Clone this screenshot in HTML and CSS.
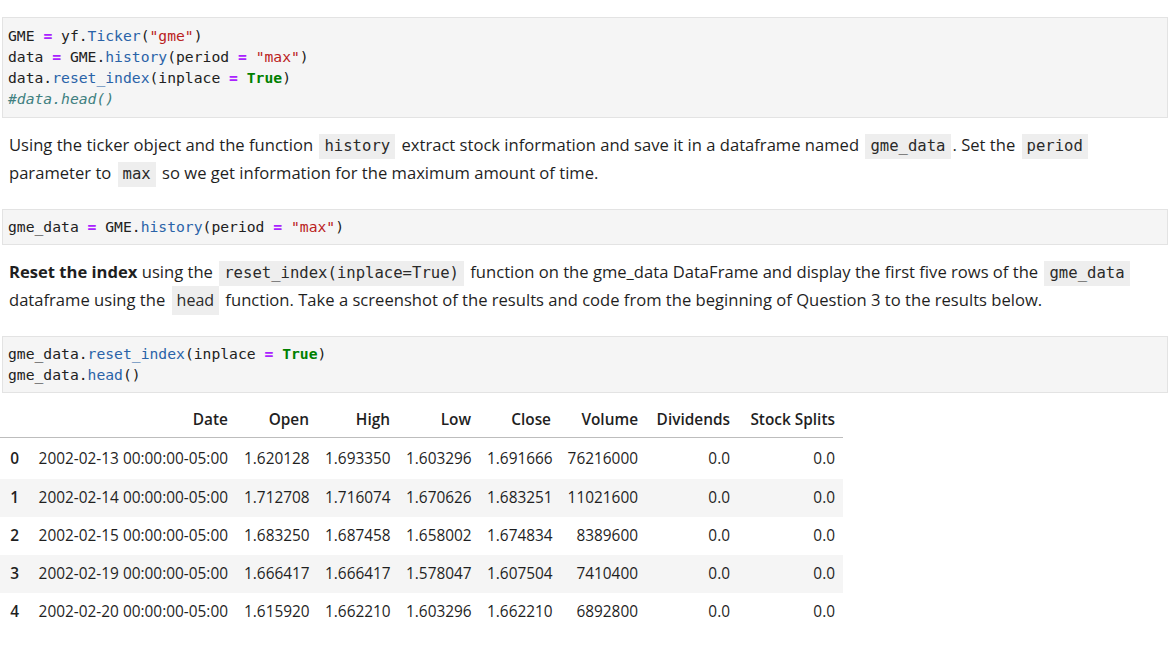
FILE: index.html
```html
<!DOCTYPE html>
<html>
<head>
<meta charset="utf-8">
<link rel="stylesheet" href="styles.css">
</head>
<body>
<div class="nb">
  <pre class="code c1"><span class="v">GME</span> <span class="op">=</span> yf.<span class="pr">Ticker</span>(<span class="s">"gme"</span>)
data <span class="op">=</span> GME.<span class="pr">history</span>(period <span class="op">=</span> <span class="s">"max"</span>)
data.<span class="pr">reset_index</span>(inplace <span class="op">=</span> <span class="kw">True</span>)
<span class="cm">#data.head()</span></pre>

  <p class="md p1">Using the ticker object and the function <code>history</code> extract stock information and save it in a dataframe named <code>gme_data</code>. Set the <code>period</code> parameter to <code>max</code> so we get information for the maximum amount of time.</p>

  <pre class="code c2">gme_data <span class="op">=</span> GME.<span class="pr">history</span>(period <span class="op">=</span> <span class="s">"max"</span>)</pre>

  <p class="md p2"><b>Reset the index</b> using the <code>reset_index(inplace=True)</code> function on the gme_data DataFrame and display the first five rows of the <code>gme_data</code> dataframe using the <code class="prop">head</code> function. Take a screenshot of the results and code from the beginning of Question 3 to the results below.</p>

  <pre class="code c3">gme_data.<span class="pr">reset_index</span>(inplace <span class="op">=</span> <span class="kw">True</span>)
gme_data.<span class="pr">head</span>()</pre>

  <table class="df">
    <colgroup>
      <col class="w-idx"><col class="w-date"><col class="w-num"><col class="w-num"><col class="w-num"><col class="w-close"><col class="w-vol"><col class="w-div"><col class="w-split">
    </colgroup>
    <thead>
      <tr><th></th><th>Date</th><th>Open</th><th>High</th><th>Low</th><th>Close</th><th>Volume</th><th>Dividends</th><th>Stock Splits</th></tr>
    </thead>
    <tbody>
      <tr class="first"><th>0</th><td>2002-02-13 00:00:00-05:00</td><td>1.620128</td><td>1.693350</td><td>1.603296</td><td>1.691666</td><td>76216000</td><td>0.0</td><td>0.0</td></tr>
      <tr><th>1</th><td>2002-02-14 00:00:00-05:00</td><td>1.712708</td><td>1.716074</td><td>1.670626</td><td>1.683251</td><td>11021600</td><td>0.0</td><td>0.0</td></tr>
      <tr><th>2</th><td>2002-02-15 00:00:00-05:00</td><td>1.683250</td><td>1.687458</td><td>1.658002</td><td>1.674834</td><td>8389600</td><td>0.0</td><td>0.0</td></tr>
      <tr><th>3</th><td>2002-02-19 00:00:00-05:00</td><td>1.666417</td><td>1.666417</td><td>1.578047</td><td>1.607504</td><td>7410400</td><td>0.0</td><td>0.0</td></tr>
      <tr><th>4</th><td>2002-02-20 00:00:00-05:00</td><td>1.615920</td><td>1.662210</td><td>1.603296</td><td>1.662210</td><td>6892800</td><td>0.0</td><td>0.0</td></tr>
    </tbody>
  </table>
</div>
</body>
</html>
```

FILE: styles.css
```css
html, body {
  margin: 0;
  padding: 0;
  background: #ffffff;
}

.nb {
  width: 1168px;
  padding-top: 17px;
  font-family: "Open Sans", "Noto Sans", sans-serif;
  color: #1f1f1f;
}

.code {
  margin: 0 0 0 2px;
  box-sizing: border-box;
  border: 1px solid #e3e3e3;
  background: #f5f5f5;
  padding: 6px 5px 7px;
  font-family: "DejaVu Sans Mono", monospace;
  font-size: 14.7px;
  line-height: 21px;
  color: #212121;
  white-space: pre;
}

.c1 { padding-top: 7px; padding-bottom: 8px; }

.op { color: #aa22ff; font-weight: bold; }
.pr { color: #2a63a8; }
.s { color: #ba2121; }
.kw { color: #008000; font-weight: bold; }
.cm { color: #408080; font-style: italic; }

.md {
  margin: 0;
  padding-left: 9px;
  font-size: 16.6px;
  line-height: 28px;
  color: #1f1f1f;
}

.md b { font-weight: 700; }

.md code {
  font-family: "DejaVu Sans Mono", monospace;
  font-size: 15.6px;
  line-height: 20px;
  background: #eeeeee;
  color: #2a2a2a;
  padding: 3px 5px 4px;
  margin: 0 2px;
}

.md code.prop {
  font-family: "Open Sans", sans-serif;
  font-size: 16px;
}

.p1 { margin-top: 13px; margin-bottom: 22px; }
.p2 { margin-top: 13px; margin-bottom: 22px; }

.df {
  margin-top: 8px;
  border-collapse: collapse;
  table-layout: fixed;
  width: 843px;
  font-size: 15.4px;
  color: #1f1f1f;
}

.w-idx { width: 27px; }
.w-date { width: 209px; }
.w-num { width: 81px; }
.w-close { width: 80px; }
.w-vol { width: 87px; }
.w-div { width: 92px; }
.w-split { width: 105px; }

.df th, .df td {
  text-align: right;
  padding: 0 8px;
  white-space: nowrap;
  font-weight: normal;
}

.df thead th {
  font-weight: 600;
  height: 36px;
  border-bottom: 1px solid #bdbdbd;
  vertical-align: middle;
}

.df tbody tr { height: 38px; }
.df tbody tr.first { height: 41px; }
.df tbody th { font-weight: 600; }
.df tbody tr:nth-child(even) { background: #f5f5f5; }
```
